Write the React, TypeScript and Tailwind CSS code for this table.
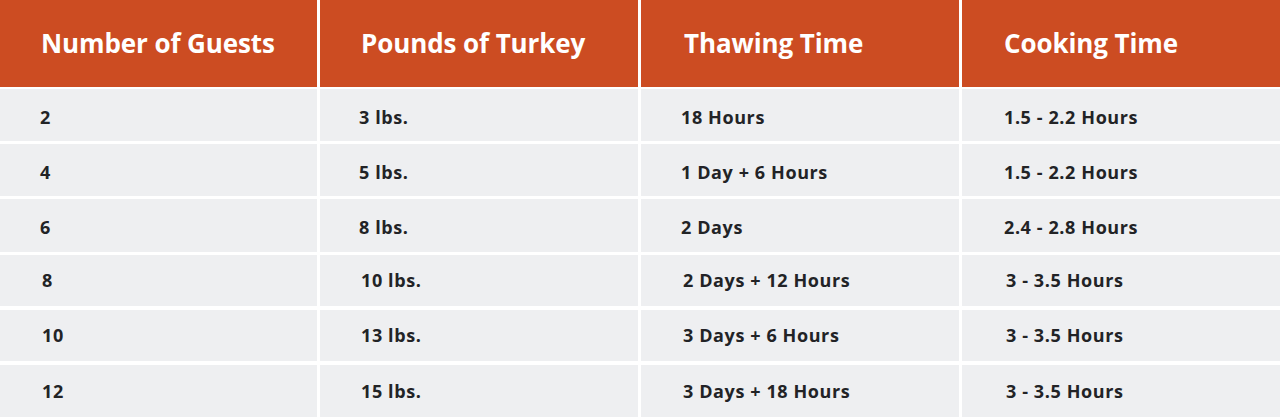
import React from "react";

const headers = ["Number of Guests", "Pounds of Turkey", "Thawing Time", "Cooking Time"];

const rows: { cells: string[]; h: string; mt: string; pt: string; pl: string[] }[] = [
  { cells: ["2", "3 lbs.", "18 Hours", "1.5 - 2.2 Hours"], h: "h-[52px]", mt: "mt-[2px]", pt: "pt-[4px]", pl: ["pl-[40px]", "pl-[39px]", "pl-[40px]", "pl-[42px]"] },
  { cells: ["4", "5 lbs.", "1 Day + 6 Hours", "1.5 - 2.2 Hours"], h: "h-[52px]", mt: "mt-[3px]", pt: "pt-[4px]", pl: ["pl-[40px]", "pl-[39px]", "pl-[40px]", "pl-[42px]"] },
  { cells: ["6", "8 lbs.", "2 Days", "2.4 - 2.8 Hours"], h: "h-[53px]", mt: "mt-[3px]", pt: "pt-[4px]", pl: ["pl-[40px]", "pl-[39px]", "pl-[40px]", "pl-[42px]"] },
  { cells: ["8", "10 lbs.", "2 Days + 12 Hours", "3 - 3.5 Hours"], h: "h-[51px]", mt: "mt-[3px]", pt: "pt-0", pl: ["pl-[42px]", "pl-[41px]", "pl-[42px]", "pl-[44px]"] },
  { cells: ["10", "13 lbs.", "3 Days + 6 Hours", "3 - 3.5 Hours"], h: "h-[51px]", mt: "mt-[4px]", pt: "pt-0", pl: ["pl-[42px]", "pl-[41px]", "pl-[42px]", "pl-[44px]"] },
  { cells: ["12", "15 lbs.", "3 Days + 18 Hours", "3 - 3.5 Hours"], h: "h-[52px]", mt: "mt-[4px]", pt: "pt-0", pl: ["pl-[42px]", "pl-[41px]", "pl-[42px]", "pl-[44px]"] },
];

const headerPl = ["pl-[41px]", "pl-[41px]", "pl-[43px]", "pl-[42px]"];

export default function App() {
  return (
    <div
      className="w-[1280px] h-[417px] bg-white overflow-hidden"
      style={{ fontFamily: "'Open Sans', 'Noto Sans', sans-serif" }}
    >
      <div className="grid grid-cols-[317px_318px_318px_1fr] gap-x-[3px] h-[87px]">
        {headers.map((h, i) => (
          <div
            key={h}
            className={`bg-[#cc4c22] text-white font-bold text-[26px] tracking-[-0.1px] flex items-center ${headerPl[i]}`}
          >
            {h}
          </div>
        ))}
      </div>
      {rows.map((r, ri) => (
        <div
          key={ri}
          className={`grid grid-cols-[317px_318px_318px_1fr] gap-x-[3px] ${r.h} ${r.mt}`}
        >
          {r.cells.map((c, ci) => (
            <div
              key={ci}
              className={`bg-[#eeeff1] text-[#222326] font-bold text-[18px] tracking-[0.6px] flex items-center ${r.pt} ${r.pl[ci]}`}
            >
              {c}
            </div>
          ))}
        </div>
      ))}
    </div>
  );
}
